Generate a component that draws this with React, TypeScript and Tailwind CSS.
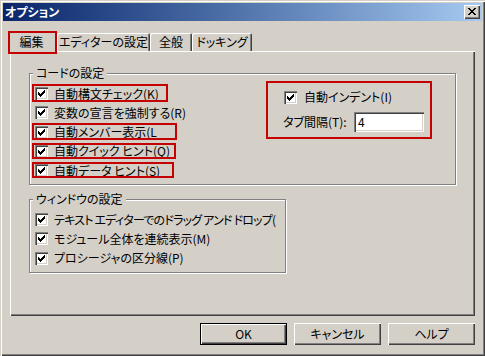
import React from 'react';

type Option = {
  label: string;
  mark?: string;
  text?: string;
};

const codeOptions: Option[] = [
  { label: '自動構文チェック(K)', mark: 'top-0 h-[18px] w-[136px]' },
  { label: '変数の宣言を強制する(R)' },
  { label: '自動メンバー表示(L', mark: 'top-0 h-[17px] w-[145px]' },
  { label: '自動クイック ヒント(Q)', mark: 'top-[1px] h-[16px] w-[144px]' },
  { label: '自動データ ヒント(S)', mark: 'top-[1px] h-[16px] w-[142px]' },
];

const windowOptions: Option[] = [
  { label: 'テキスト エディターでのドラッグ アンド ドロップ(', text: 'tracking-[-0.8px]' },
  { label: 'モジュール全体を連続表示(M)' },
  { label: 'プロシージャの区分線(P)' },
];

const raised =
  'shadow-[inset_1px_1px_0_#fff,inset_-1px_-1px_0_#404040,inset_-2px_-2px_0_#808080]';
const sunken =
  'shadow-[inset_1px_1px_0_#808080,inset_2px_2px_0_#404040,inset_-1px_-1px_0_#fff,inset_-2px_-2px_0_#d4d0c8]';

function CheckBox() {
  return (
    <span className="flex h-[13px] w-[13px] shrink-0 items-center justify-center bg-white shadow-[inset_1px_1px_0_#808080,inset_2px_2px_0_#404040,inset_-1px_-1px_0_#fff,inset_-2px_-2px_0_#d4d0c8]">
      <svg width="7" height="7" viewBox="0 0 7 7" shapeRendering="crispEdges">
        <path
          d="M0 2h1v3H0zM1 3h1v3H1zM2 4h1v3H2zM3 3h1v3H3zM4 2h1v3H4zM5 1h1v3H5zM6 0h1v3H6z"
          fill="#000"
        />
      </svg>
    </span>
  );
}

function OptionRow({ label, mark, text }: Option) {
  return (
    <div className="relative flex h-[19.25px] items-center gap-[6px] whitespace-nowrap">
      <CheckBox />
      <span className={text}>{label}</span>
      {/* red annotation frame */}
      {mark && <span className={`absolute left-[-3px] border-2 border-[#c40000] ${mark}`} />}
    </div>
  );
}

function Tab({ label, width }: { label: string; width: string }) {
  return (
    <div
      className={`flex h-[18px] items-center justify-center rounded-t-[2px] shadow-[inset_1px_1px_0_#fff,inset_-1px_0_0_#404040,inset_-2px_0_0_#808080] ${width}`}
    >
      {label}
    </div>
  );
}

function Button({ label, isDefault }: { label: string; isDefault?: boolean }) {
  return (
    <button
      className={`flex h-[22px] w-[87px] items-center justify-center ${
        isDefault
          ? 'border border-black shadow-[inset_1px_1px_0_#fff,inset_-1px_-1px_0_#404040,inset_-2px_-2px_0_#808080]'
          : raised
      }`}
    >
      {label}
    </button>
  );
}

export default function App() {
  return (
    <div className="flex h-[356px] w-[485px] flex-col bg-[#d4d0c8] font-['Noto_Sans_CJK_JP',sans-serif] text-[12px] leading-[14px] text-black [font-feature-settings:'palt'] shadow-[inset_1px_1px_0_#d4d0c8,inset_2px_2px_0_#fff,inset_-1px_-1px_0_#404040,inset_-2px_-2px_0_#808080]">
      {/* Title bar */}
      <div className="mx-[3px] mt-[3px] flex h-[18px] items-center justify-between bg-linear-to-r from-[#0a246a] to-[#a6caf0] pl-[2px] pr-[2px]">
        <span className="font-bold text-white">オプション</span>
        <div className={`flex h-[14px] w-[16px] items-center justify-center bg-[#d4d0c8] ${raised}`}>
          <svg width="8" height="7" viewBox="0 0 8 7" shapeRendering="crispEdges" className="-mt-[1px]">
            <path
              d="M0 0h2v1H0zM6 0h2v1H6zM1 1h2v1H1zM5 1h2v1H5zM2 2h4v1H2zM3 3h2v1H3zM2 4h4v1H2zM1 5h2v1H1zM5 5h2v1H5zM0 6h2v1H0zM6 6h2v1H6z"
              fill="#000"
            />
          </svg>
        </div>
      </div>

      {/* Tabs */}
      <div className="ml-[8px] mt-[10px] flex h-[20px] items-end">
        <div className="relative z-10 -mb-[3px] flex h-[23px] w-[49px] items-center justify-center border-2 border-[#c40000] bg-[#d4d0c8] pb-[1px] pr-[2px]">
          編集
        </div>
        <Tab label="エディターの設定" width="w-[93px]" />
        <Tab label="全般" width="w-[42px]" />
        <Tab label="ドッキング" width="w-[60px]" />
      </div>

      {/* Tab panel */}
      <div className="ml-[10px] h-[265px] w-[465px] pl-[19px] pt-[15px] shadow-[inset_1px_1px_0_#fff,inset_-1px_-1px_0_#404040,inset_-2px_-2px_0_#808080]">
        <fieldset className="h-[119px] w-[427px] min-w-0 border border-[#808080] shadow-[inset_1px_1px_0_#fff,1px_1px_0_#fff]">
          <legend className="ml-[3px] bg-[#d4d0c8] px-[3px]">コードの設定</legend>
          <div className="flex pt-[1px]">
            <div className="flex-1 pl-[5px] pt-[3px]">
              {codeOptions.map((o) => (
                <OptionRow key={o.label} {...o} />
              ))}
            </div>
            <div className="mr-[23px] h-[58px] w-[166px] border-2 border-[#c40000] pl-[15px] pt-[7px]">
              <div className="flex h-[14px] items-center gap-[7px] pl-[1px]">
                <CheckBox />
                <span>自動インデント(I)</span>
              </div>
              <div className="mt-[8px] flex items-center">
                <span className="w-[71px]">タブ間隔(T):</span>
                <div className={`flex h-[20px] w-[70px] items-center bg-white pl-[4px] ${sunken}`}>4</div>
              </div>
            </div>
          </div>
        </fieldset>

        <fieldset className="mt-[7px] h-[81px] w-[257px] min-w-0 border border-[#808080] shadow-[inset_1px_1px_0_#fff,1px_1px_0_#fff]">
          <legend className="ml-[3px] bg-[#d4d0c8] px-[3px]">ウィンドウの設定</legend>
          <div className="pl-[5px] pt-[4px]">
            {windowOptions.map((o) => (
              <OptionRow key={o.label} {...o} />
            ))}
          </div>
        </fieldset>
      </div>

      {/* Buttons */}
      <div className="mt-[7px] flex justify-end gap-[7px] pr-[10px]">
        <Button label="OK" isDefault />
        <Button label="キャンセル" />
        <Button label="ヘルプ" />
      </div>
    </div>
  );
}
